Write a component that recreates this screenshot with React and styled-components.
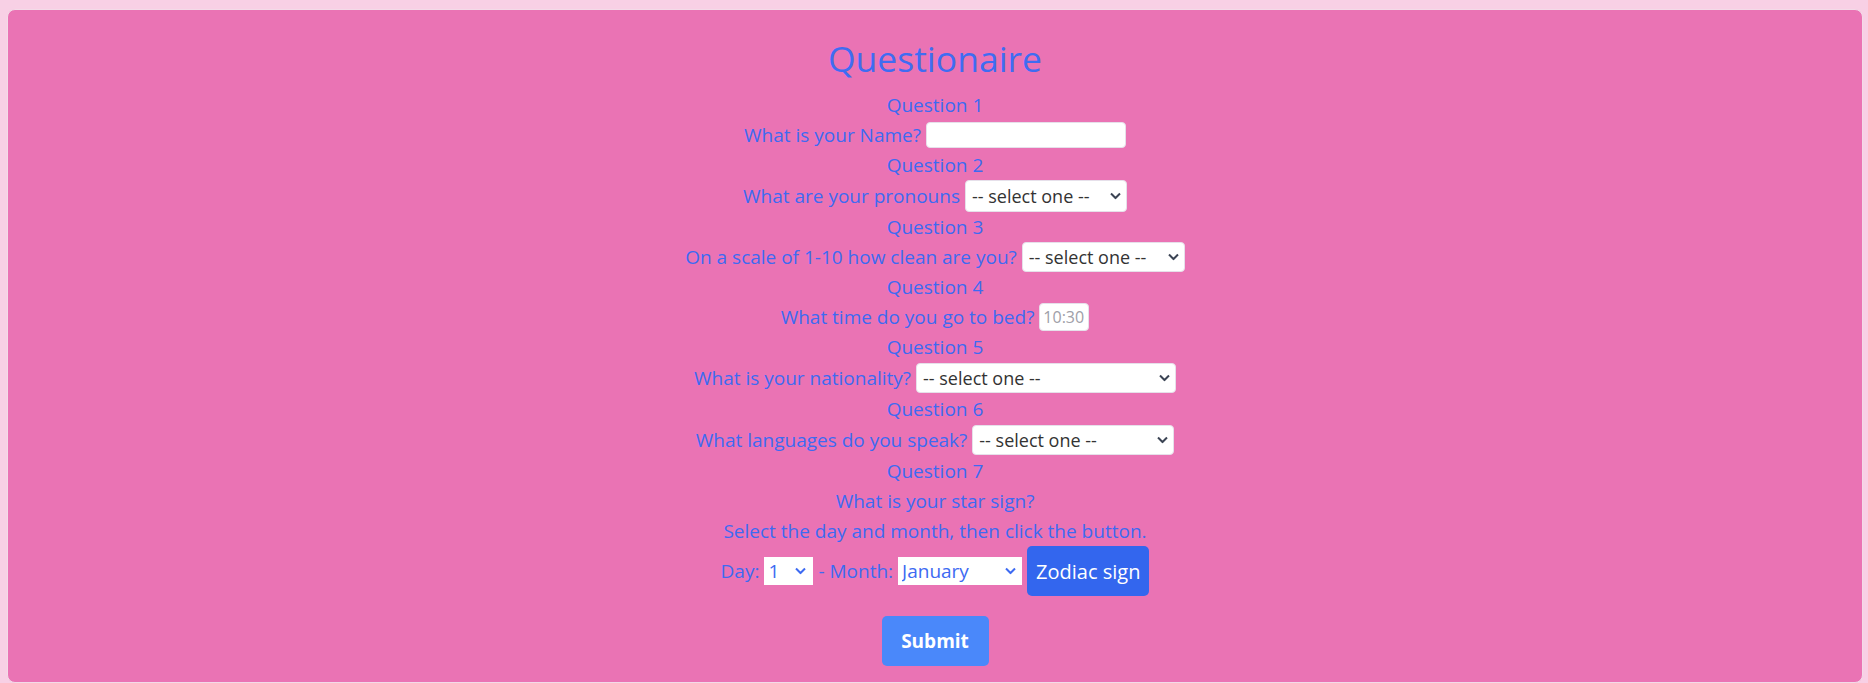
import React from "react";
import styled, { createGlobalStyle } from "styled-components";

const GlobalStyle = createGlobalStyle`
  html, body {
    margin: 0;
    padding: 0;
    background: #f8d0e5;
  }
  body {
    font-family: "Open Sans", "Noto Sans", sans-serif;
  }
`;

const Page = styled.div`
  padding: 9px 5px 3px 7px;
  min-height: 683px;
  box-sizing: border-box;
`;

const Card = styled.div`
  background: #ea73b4;
  border: 1px solid #f3dbe8;
  border-radius: 8px;
  padding: 24px 0 16px;
  display: flex;
  flex-direction: column;
  align-items: center;
  color: #3d6af2;
  font-size: 19px;
`;

const Heading = styled.h1`
  margin: 0 0 8px;
  font-size: 35.5px;
  font-weight: 400;
  line-height: 48px;
  color: #3f6cf2;
`;

const Line = styled.div`
  display: flex;
  align-items: center;
  justify-content: center;
  gap: 5px;
  min-height: ${({ $h }) => $h || 30}px;
  line-height: 30px;
  white-space: nowrap;
`;

const TextBox = styled.input`
  width: ${({ $w }) => $w}px;
  height: ${({ $h }) => $h}px;
  box-sizing: border-box;
  border: 1px solid #e6e0ea;
  border-radius: 4px;
  background: #fff;
  font-family: inherit;
  font-size: 16px;
  padding: 0 3px;
  color: #444;
  &::placeholder {
    color: #a0a0a8;
  }
`;

const SelectWrap = styled.span`
  position: relative;
  display: inline-flex;
`;

const Select = styled.select`
  appearance: none;
  width: ${({ $w }) => $w}px;
  height: ${({ $h }) => $h}px;
  box-sizing: border-box;
  border: 1px solid #e6e0ea;
  border-radius: 4px;
  background: #fff;
  font-family: inherit;
  font-size: 18px;
  color: #333;
  padding: 0 22px 0 6px;
`;

const PlainSelect = styled.select`
  appearance: none;
  width: ${({ $w }) => $w}px;
  height: 28px;
  box-sizing: border-box;
  border: none;
  border-radius: 0;
  background: #fff;
  font-family: inherit;
  font-size: 19px;
  color: #3d6af2;
  padding: 0 20px 0 4px;
`;

const Chevron = styled.svg`
  position: absolute;
  right: ${({ $r }) => $r}px;
  top: 50%;
  transform: translateY(-50%);
  pointer-events: none;
`;

const ZodiacButton = styled.button`
  height: 50px;
  padding: 0 9px;
  border: none;
  border-radius: 5px;
  background: #3366ee;
  color: #fff;
  font-family: inherit;
  font-size: 20px;
`;

const SubmitButton = styled.button`
  margin-top: 20px;
  width: 107px;
  height: 50px;
  border: none;
  border-radius: 5px;
  background: #4a88fa;
  color: #fff;
  font-family: inherit;
  font-size: 19px;
  font-weight: 700;
`;

function Arrow({ color = "#3b4454", right = 6 }) {
  return (
    <Chevron $r={right} width="11" height="7" viewBox="0 0 11 7">
      <path d="M1 1l4.5 4.5L10 1" fill="none" stroke={color} strokeWidth="2" />
    </Chevron>
  );
}

function Dropdown({ w, h, options }) {
  return (
    <SelectWrap>
      <Select $w={w} $h={h} defaultValue="">
        <option value="">-- select one --</option>
        {options.map((o) => (
          <option key={o}>{o}</option>
        ))}
      </Select>
      <Arrow />
    </SelectWrap>
  );
}

const days = Array.from({ length: 31 }, (_, i) => i + 1);
const months = [
  "January", "February", "March", "April", "May", "June",
  "July", "August", "September", "October", "November", "December",
];

export default function App() {
  return (
    <>
      <GlobalStyle />
      <Page>
        <Card>
          <Heading>Questionaire</Heading>
          <Line>Question 1</Line>
          <Line>
            What is your Name? <TextBox $w={200} $h={26} type="text" />
          </Line>
          <Line>Question 2</Line>
          <Line $h={32}>
            What are your pronouns
            <Dropdown w={162} h={32} options={["she/her", "he/him", "they/them"]} />
          </Line>
          <Line>Question 3</Line>
          <Line>
            On a scale of 1-10 how clean are you?
            <Dropdown w={163} h={30} options={["1", "2", "3", "4", "5", "6", "7", "8", "9", "10"]} />
          </Line>
          <Line>Question 4</Line>
          <Line>
            What time do you go to bed? <TextBox $w={50} $h={28} placeholder="10:30" />
          </Line>
          <Line>Question 5</Line>
          <Line $h={32}>
            What is your nationality?
            <Dropdown w={260} h={30} options={["British", "Irish", "Other"]} />
          </Line>
          <Line>Question 6</Line>
          <Line $h={32}>
            What languages do you speak?
            <Dropdown w={202} h={30} options={["English", "Spanish", "French"]} />
          </Line>
          <Line>Question 7</Line>
          <Line>What is your star sign?</Line>
          <Line>Select the day and month, then click the button.</Line>
          <Line>
            Day:
            <SelectWrap>
              <PlainSelect $w={49}>
                {days.map((d) => (
                  <option key={d}>{d}</option>
                ))}
              </PlainSelect>
              <Arrow color="#3d6af2" right={7} />
            </SelectWrap>
            - Month:
            <SelectWrap>
              <PlainSelect $w={124}>
                {months.map((m) => (
                  <option key={m}>{m}</option>
                ))}
              </PlainSelect>
              <Arrow color="#3d6af2" right={6} />
            </SelectWrap>
            <ZodiacButton>Zodiac sign</ZodiacButton>
          </Line>
          <SubmitButton>Submit</SubmitButton>
        </Card>
      </Page>
    </>
  );
}
